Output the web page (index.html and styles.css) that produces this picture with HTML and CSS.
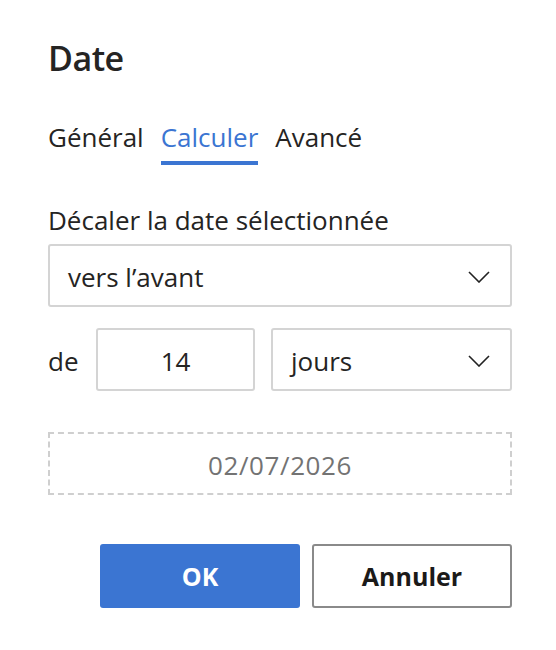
FILE: index.html
```html
<!DOCTYPE html>
<html lang="fr">
<head>
<meta charset="utf-8">
<title>Date</title>
<link rel="stylesheet" href="styles.css">
</head>
<body>
<div class="dialog">
  <h1 class="title">Date</h1>
  <div class="tabs">
    <span class="tab">Général</span>
    <span class="tab active">Calculer</span>
    <span class="tab">Avancé</span>
  </div>
  <div class="label">Décaler la date sélectionnée</div>
  <div class="select full">
    <span class="select-text">vers l’avant</span>
    <svg class="chev" width="22" height="12" viewBox="0 0 22 12"><path d="M1 1 L11 11 L21 1" fill="none" stroke="#222" stroke-width="1.6"/></svg>
  </div>
  <div class="row">
    <span class="de">de</span>
    <div class="num">14</div>
    <div class="select unit">
      <span class="select-text">jours</span>
      <svg class="chev" width="22" height="12" viewBox="0 0 22 12"><path d="M1 1 L11 11 L21 1" fill="none" stroke="#222" stroke-width="1.6"/></svg>
    </div>
  </div>
  <div class="result">02/07/2026</div>
  <div class="buttons">
    <button class="btn primary">OK</button>
    <button class="btn secondary">Annuler</button>
  </div>
</div>
</body>
</html>
```
FILE: styles.css
```css
html, body {
  margin: 0;
  padding: 0;
  background: #ffffff;
}
body {
  font-family: "Open Sans", "Noto Sans", sans-serif;
  color: #252423;
}
.dialog {
  width: 464px;
  padding: 38px 0 0 48px;
}
.title {
  margin: 0;
  font-size: 34px;
  line-height: 41px;
  font-weight: 600;
  letter-spacing: -0.5px;
}
.tabs {
  display: flex;
  gap: 17px;
  margin-top: 41px;
  font-size: 26px;
  line-height: 34px;
}
.tab {
  padding-bottom: 7px;
  border-bottom: 4px solid transparent;
}
.tab.active {
  color: #3b75d2;
  border-bottom-color: #3b75d2;
}
.label {
  margin-top: 38px;
  font-size: 26px;
  line-height: 34px;
}
.select {
  box-sizing: border-box;
  height: 63px;
  border: 2px solid #d4d4d4;
  border-radius: 3px;
  display: flex;
  align-items: center;
  justify-content: space-between;
  padding: 2px 20px 0 18px;
  font-size: 26px;
}
.full {
  margin-top: 7px;
}
.chev {
  display: block;
}
.row {
  display: flex;
  align-items: center;
  margin-top: 21px;
  font-size: 26px;
}
.de {
  width: 48px;
  padding-top: 2px;
}
.num {
  box-sizing: border-box;
  width: 159px;
  height: 63px;
  border: 2px solid #d4d4d4;
  border-radius: 3px;
  display: flex;
  align-items: center;
  justify-content: center;
  padding-top: 2px;
}
.unit {
  flex: 1;
  margin-left: 16px;
}
.result {
  box-sizing: border-box;
  margin-top: 41px;
  height: 63px;
  border: 2px dashed #cfcfcf;
  display: flex;
  align-items: center;
  justify-content: center;
  padding-top: 2px;
  font-size: 26px;
  letter-spacing: 0.6px;
  color: #737373;
}
.buttons {
  display: flex;
  justify-content: flex-end;
  gap: 12px;
  margin-top: 49px;
}
.btn {
  box-sizing: border-box;
  width: 200px;
  height: 64px;
  border-radius: 3px;
  font-family: "Open Sans", "Noto Sans", sans-serif;
  font-size: 25px;
  font-weight: 700;
  padding: 0;
}
.primary {
  background: #3b75d2;
  color: #ffffff;
  border: none;
}
.secondary {
  background: #ffffff;
  color: #1b1a19;
  border: 2px solid #8a8a8a;
}
```
